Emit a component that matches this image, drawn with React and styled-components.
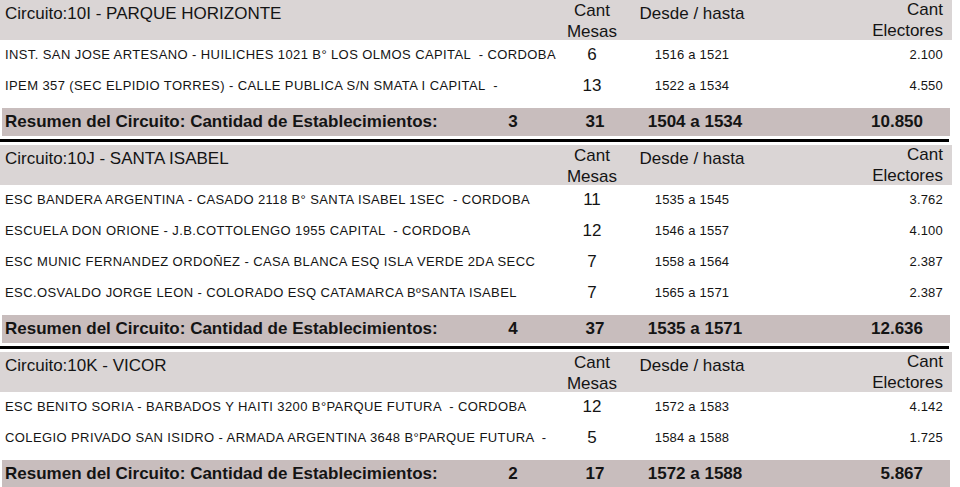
import React from 'react';
import styled, { createGlobalStyle } from 'styled-components';

const sections = [
  {
    title: 'Circuito:10I - PARQUE HORIZONTE',
    rows: [
      ['INST. SAN JOSE ARTESANO - HUILICHES 1021 B° LOS OLMOS CAPITAL  - CORDOBA', 6, '1516 a 1521', '2.100'],
      ['IPEM 357 (SEC ELPIDIO TORRES) - CALLE PUBLICA S/N SMATA I CAPITAL  -', 13, '1522 a 1534', '4.550'],
    ],
    summary: [3, 31, '1504 a 1534', '10.850'],
  },
  {
    title: 'Circuito:10J - SANTA ISABEL',
    rows: [
      ['ESC BANDERA ARGENTINA - CASADO 2118 B° SANTA ISABEL 1SEC  - CORDOBA', 11, '1535 a 1545', '3.762'],
      ['ESCUELA DON ORIONE - J.B.COTTOLENGO 1955 CAPITAL  - CORDOBA', 12, '1546 a 1557', '4.100'],
      ['ESC MUNIC FERNANDEZ ORDOÑEZ - CASA BLANCA ESQ ISLA VERDE 2DA SECC', 7, '1558 a 1564', '2.387'],
      ['ESC.OSVALDO JORGE LEON - COLORADO ESQ CATAMARCA BºSANTA ISABEL', 7, '1565 a 1571', '2.387'],
    ],
    summary: [4, 37, '1535 a 1571', '12.636'],
  },
  {
    title: 'Circuito:10K - VICOR',
    rows: [
      ['ESC BENITO SORIA - BARBADOS Y HAITI 3200 B°PARQUE FUTURA  - CORDOBA', 12, '1572 a 1583', '4.142'],
      ['COLEGIO PRIVADO SAN ISIDRO - ARMADA ARGENTINA 3648 B°PARQUE FUTURA  -', 5, '1584 a 1588', '1.725'],
    ],
    summary: [2, 17, '1572 a 1588', '5.867'],
  },
];

export default function App() {
  return (
    <>
      <GlobalStyle />
      <Report>
        {sections.map((s) => (
          <Section key={s.title}>
            <Header>
              <Title>{s.title}</Title>
              <TwoLine>Cant<br />Mesas</TwoLine>
              <HeadCell>Desde / hasta</HeadCell>
              <TwoLine right>Cant<br />Electores</TwoLine>
            </Header>
            {s.rows.map((r) => (
              <Row key={r[0]}>
                <Name>{r[0]}</Name>
                <Mesas>{r[1]}</Mesas>
                <Range>{r[2]}</Range>
                <Electores>{r[3]}</Electores>
              </Row>
            ))}
            <Summary>
              <span>Resumen del Circuito: Cantidad de Establecimientos:</span>
              <SumCenter>{s.summary[0]}</SumCenter>
              <span />
              <SumCenter>{s.summary[1]}</SumCenter>
              <SumCenter>{s.summary[2]}</SumCenter>
              <SumRight>{s.summary[3]}</SumRight>
            </Summary>
            <Rule />
          </Section>
        ))}
      </Report>
    </>
  );
}

const GlobalStyle = createGlobalStyle`
  html, body {
    margin: 0;
    padding: 0;
    background: #fff;
    overflow: hidden;
  }
  body {
    font-family: 'Liberation Sans', Arial, sans-serif;
    color: #141414;
  }
`;

const Report = styled.div`
  width: 952px;
  display: flex;
  flex-direction: column;
`;

const Section = styled.section`
  display: flex;
  flex-direction: column;
`;

const Header = styled.div`
  height: 40px;
  background: #dad5d5;
  display: grid;
  grid-template-columns: 555px 64px 136px 1fr;
  padding: 0 9px 0 5px;
  font-size: 17px;
`;

const Title = styled.div`
  line-height: 27px;
  white-space: nowrap;
`;

const HeadCell = styled.div`
  line-height: 27px;
  text-align: center;
  white-space: nowrap;
`;

const TwoLine = styled.div`
  line-height: 21px;
  text-align: ${(p) => (p.right ? 'right' : 'center')};
  margin-top: ${(p) => (p.right ? '-1px' : '0')};
`;

const Row = styled.div`
  height: 31px;
  display: grid;
  grid-template-columns: 555px 64px 136px 1fr;
  padding: 0 9px 3px 5px;
  box-sizing: border-box;
  align-items: center;
`;

const Name = styled.div`
  font-size: 13px;
  letter-spacing: 0.4px;
  white-space: pre;
`;

const Mesas = styled.div`
  font-size: 17px;
  text-align: center;
  padding-top: 2px;
`;

const Range = styled.div`
  font-size: 13px;
  letter-spacing: 0.2px;
  text-align: center;
`;

const Electores = styled.div`
  font-size: 13px;
  letter-spacing: 0.2px;
  text-align: right;
`;

const Summary = styled.div`
  height: 28px;
  margin: 6px 2px 0 2px;
  background: #c8bdbd;
  display: grid;
  grid-template-columns: 473px 70px 15px 64px 136px 1fr;
  align-items: center;
  padding: 0 27px 0 3px;
  font-size: 17px;
  font-weight: bold;
  white-space: nowrap;
`;

const SumCenter = styled.span`
  text-align: center;
`;

const SumRight = styled.span`
  text-align: right;
`;

const Rule = styled.div`
  height: 3px;
  width: 949px;
  background: #000;
  margin: 3px 0 3px 0;
`;
